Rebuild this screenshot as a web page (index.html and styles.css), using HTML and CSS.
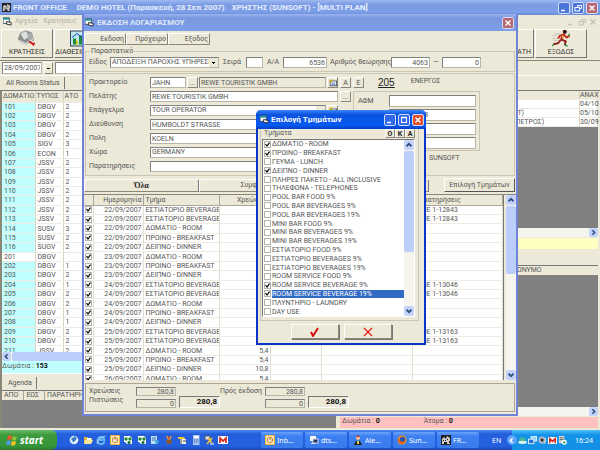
FILE: index.html
```html
<!DOCTYPE html>
<html lang="el">
<head>
    <meta charset="UTF-8">
    <meta name="viewport" content="width=device-width, initial-scale=1.0">
    <title>FRONT OFFICE</title>
    <link rel="stylesheet" href="styles.css">
</head>
<body>
    <svg class="defs" aria-hidden="true">
        <symbol id="i-form" viewBox="0 0 10 10"><rect x="0" y="1" width="7" height="6" fill="#fff" stroke="#345"/><rect x="0" y="1" width="7" height="2" fill="#2a9a9a"/><path d="M4 5l5 1v3l-5-1z" fill="#fff" stroke="#222"/></symbol>
        <symbol id="i-hotel" viewBox="0 0 10 10"><rect width="10" height="10" fill="#222"/><path d="M1 9V4l2-2 2 2 1-3 3 2v6" fill="#ccc"/><path d="M2 5h1v1H2zM4 5h1v1H4zM6 4h1v1H6zM3 7h3v2H3zM8 6h1v2H8z" fill="#222"/></symbol>
        <symbol id="i-book" viewBox="0 0 20 18"><path d="M1 9l2-5 6-3 6 2 2 8-8 4-7-3z" fill="#8a8f8c"/><path d="M3 4l6-3 4 6-6 4z" fill="#dde1dd" stroke="#777" stroke-width=".6"/><path d="M10 4l4-1 3 7-5 2z" fill="#a8aea9"/><path d="M2 11l7 3 7-4" stroke="#f4f4f4" fill="none"/><path d="M12 12l3 2h3M15 14l2 2" stroke="#d31212" stroke-width="1.600" fill="none"/></symbol>
        <symbol id="i-chart" viewBox="0 0 20 16"><rect width="20" height="16" fill="#345"/><rect x="1" y="1" width="18" height="14" fill="#bfe6ea"/><path d="M3 14V8h3v6zM9 14V5h3v9zM15 14V3h3v11z" fill="#1b8a3c"/><path d="M6 14V10h2v4zM12 14V8h2v6z" fill="#e7c11a"/><path d="M2 7l5-4 5 4 6-5" stroke="#1747c4" fill="none"/></symbol>
        <symbol id="i-run" viewBox="0 0 20 20"><path d="M1 7h7M3 5h7M1 10h6M2 12h5" stroke="#c9c5b8" stroke-width="1"/><circle cx="14" cy="3" r="2.200" fill="#3b1512"/><path d="M13 5l-3 6M13 6l-4 1-2 3M13 6l3 3 3-2" stroke="#c02a1c" stroke-width="2" fill="none"/><path d="M10 11l5 2-1 4M10 11l-3 4-5 1" stroke="#8c1f16" stroke-width="2" fill="none"/><path d="M14 17l3 1M2 16l-1 2M18 7l1-2" stroke="#159a3c" stroke-width="1.400"/><path d="M11 7l2 3" stroke="#f6c945" stroke-width="1.200"/></symbol>
        <symbol id="i-open" viewBox="0 0 10 10"><rect x="1.500" y="2.500" width="8" height="6" fill="#fff" stroke="#445"/><path d="M3 5h5M3 7h5" stroke="#3b69b5"/><path d="M0 1l4 3M3 0v4M0 3h4" stroke="#d8b600"/></symbol>
        <symbol id="i-check" viewBox="0 0 10 10"><path d="M1 5l2 4 5-8" fill="none" stroke="#d80000" stroke-width="1.800"/></symbol>
        <symbol id="i-x" viewBox="0 0 10 10"><path d="M1 1l8 8M9 1L1 9" fill="none" stroke="#e01818" stroke-width="1.100"/></symbol>
        <symbol id="i-up" viewBox="0 0 8 8"><path d="M2 5l2-2 2 2" fill="none" stroke="#35507f" stroke-width="1.500"/></symbol>
        <symbol id="i-down" viewBox="0 0 8 8"><path d="M2 3l2 2 2-2" fill="none" stroke="#35507f" stroke-width="1.500"/></symbol>
        <symbol id="i-left" viewBox="0 0 8 8"><path d="M5 2L3 4l2 2" fill="none" stroke="#35507f" stroke-width="1.500"/></symbol>
        <symbol id="i-expand" viewBox="0 0 8 8"><path d="M5 2L3 4l2 2" fill="none" stroke="#fff" stroke-width="1.500"/></symbol>
        <symbol id="i-right" viewBox="0 0 8 8"><path d="M3 2l2 2-2 2" fill="none" stroke="#35507f" stroke-width="1.500"/></symbol>
        <symbol id="i-min" viewBox="0 0 8 8"><path d="M1 6.500h4" stroke="currentColor" stroke-width="1.500"/></symbol>
        <symbol id="i-max" viewBox="0 0 8 8"><path d="M1 1.500h6" stroke="currentColor" stroke-width="1.500"/><rect x="1.500" y="1.500" width="5" height="5" fill="none" stroke="currentColor"/></symbol>
        <symbol id="i-restore" viewBox="0 0 8 8"><path d="M3.500 3V1.500h4v3H6" fill="none" stroke="currentColor"/><rect x="1" y="3.500" width="4.500" height="3.500" fill="none" stroke="currentColor"/></symbol>
        <symbol id="i-close" viewBox="0 0 8 8"><path d="M1.500 1.500l5 5M6.500 1.500l-5 5" stroke="currentColor" stroke-width="1.400"/></symbol>
        <symbol id="i-flag" viewBox="0 0 12 12"><path d="M2 2q2-1.500 4 0L5 6Q3 5 1 6z" fill="#f0592a"/><path d="M7 2q2 1.500 4 0l-1 4q-2 1-4 0z" fill="#8cc63e"/><path d="M1 7q2-1 4 0l-1 4Q2 10 0 11z" fill="#4f9bf0"/><path d="M6 7q2 1 4 0l-1 4q-2 1-4 0z" fill="#fbc81d"/></symbol>
        <symbol id="i-ie" viewBox="0 0 10 10"><path d="M8.500 6.500A3.600 3.600 0 1 1 8.600 5H3" fill="none" stroke="#6cc5f7" stroke-width="1.700"/><path d="M1 9Q0 6 5 3t4-1" fill="none" stroke="#cfe9fb" stroke-width=".8"/></symbol>
        <symbol id="i-globe" viewBox="0 0 10 10"><circle cx="5" cy="5" r="4.300" fill="#d9ecfb"/><path d="M2 4l4-3 2 3-3 4z" fill="#3b7fc4"/><path d="M5 8l4-4" stroke="#fff" stroke-width="1.300"/></symbol>
        <symbol id="i-folder" viewBox="0 0 10 10"><path d="M1 2h3l1 1h4v5H1z" fill="#e5b93f"/><path d="M2 5h8L8 9H1z" fill="#fbe69a"/><rect x="4" y="3" width="4" height="2" fill="#fff"/></symbol>
        <symbol id="i-outlook" viewBox="0 0 10 10"><rect width="10" height="10" rx="1" fill="#f3b23c"/><rect x="1" y="1" width="8" height="8" fill="#fde8ba"/><circle cx="5" cy="5" r="2.600" fill="#fff" stroke="#c07818"/><path d="M5 3v2h1.500" stroke="#a05c10" fill="none" stroke-width=".8"/></symbol>
        <symbol id="i-green" viewBox="0 0 10 10"><path d="M1 1h6l2 2v4H1z" fill="#fff"/><circle cx="3" cy="4" r="1.700" fill="#1d8a33"/><circle cx="7" cy="4" r="1.700" fill="#1d8a33"/><path d="M2 7h7v2H4z" fill="#f3f3f3"/><circle cx="6" cy="7.500" r="1.500" fill="#176b2a"/></symbol>
        <symbol id="i-doc" viewBox="0 0 10 10"><rect x="1" y="1" width="6" height="8" fill="#bfe2f7"/><path d="M2 3h4M2 5h4" stroke="#3472c0"/><circle cx="7" cy="7" r="2" fill="#43a7dd"/></symbol>
        <symbol id="i-brush" viewBox="0 0 10 10"><path d="M3 1l2 5M7 1L5 6" stroke="#e5a12c" stroke-width="1.500"/><path d="M5 1v5" stroke="#d23c28"/><path d="M2 5h6L7 9H3z" fill="#8b5a34"/></symbol>
        <symbol id="i-tool" viewBox="0 0 10 10"><path d="M1 2h6l1 2H1z" fill="#e8c63a"/><rect x="3" y="4" width="6" height="5" fill="#f4f0e4"/><path d="M4 4v5M6 6h3" stroke="#444"/></symbol>
        <symbol id="i-calc" viewBox="0 0 10 10"><rect x="2" y="0" width="6.500" height="10" fill="#a9c7f2"/><rect x="3" y="1" width="4.500" height="2" fill="#fff"/><path d="M3 5h5M3 7h5" stroke="#2c57a8" stroke-dasharray="1 .7"/></symbol>
        <symbol id="i-pair" viewBox="0 0 10 10"><rect x="1" y="1" width="5" height="4" fill="#dfe8f4" stroke="#556"/><path d="M4 3l4 5M8 3L3 9" stroke="#f3c63a" stroke-width="1.600"/><path d="M6 9h4" stroke="#fff"/></symbol>
        <symbol id="i-gmail" viewBox="0 0 10 10"><rect y="1" width="10" height="8" rx="1" fill="#fff"/><path d="M2 8V3l3 3 3-3v5" fill="none" stroke="#d1261c" stroke-width="1.700"/></symbol>
        <symbol id="i-pc" viewBox="0 0 10 10"><rect x="1" y="1" width="6" height="5" fill="#f4f4f4"/><rect x="4" y="4" width="5" height="4" fill="#22335c" stroke="#dde"/><path d="M2 8h4v1H2z" fill="#d8e2f2"/></symbol>
        <symbol id="i-net" viewBox="0 0 10 10"><rect x="3.500" y=".5" width="6" height="5" fill="#8fd0fb" stroke="#e8f4ff"/><rect x=".5" y="3.500" width="6" height="5" fill="#2a6fd0" stroke="#e8f4ff"/></symbol>
        <symbol id="i-man" viewBox="0 0 10 10"><circle cx="5" cy="3" r="2" fill="#f0c090"/><path d="M3 2l2-2 2 2z" fill="#c22"/><path d="M1 10l2-4h4l2 4z" fill="#222"/><path d="M4 6h2v3H4z" fill="#e6d23a"/></symbol>
        <symbol id="i-fox" viewBox="0 0 10 10"><circle cx="5" cy="5" r="4.500" fill="#f08a1c"/><circle cx="5.500" cy="4.500" r="2.700" fill="#2b55b5"/><path d="M1 3q2 5 7 3l-1 2q-3 2-6-2z" fill="#e25a12"/></symbol>
        <symbol id="i-hat" viewBox="0 0 10 10"><path d="M1 6q0-4 4-5 4 1 4 5z" fill="#46b59a"/><ellipse cx="5" cy="7" rx="5" ry="1.800" fill="#dff2ee"/></symbol>
        <symbol id="i-speaker" viewBox="0 0 10 10"><circle cx="4.500" cy="4.500" r="3.500" fill="#8a93a0" stroke="#dde"/><circle cx="4.500" cy="4.500" r="1.400" fill="#333"/><path d="M8 2q2 3-1 7" stroke="#cfd6e0" fill="none"/></symbol>
        <symbol id="i-play" viewBox="0 0 10 10"><rect x="1" y="0" width="6" height="8" fill="#d8d8d8"/><path d="M2 2h4M2 4h4" stroke="#555"/><circle cx="7" cy="7" r="2.800" fill="#fff"/><path d="M6 5.500l3 1.500-3 1.500z" fill="#1a8a34"/></symbol>
    </svg>

    <header class="app-title">
        <svg class="ic"><use href="#i-hotel"/></svg>
        <h1>FRONT OFFICE</h1>
        <span class="app-hotel">DEMO HOTEL (Παρασκευή, 28 Σεπ 2007)</span>
        <span>ΧΡΗΣΤΗΣ (SUNSOFT) - [MULTI PLAN]</span>
        <div class="win-buttons">
            <button class="wb" aria-label="Minimize"><svg><use href="#i-min"/></svg></button>
            <button class="wb" aria-label="Restore"><svg><use href="#i-restore"/></svg></button>
            <button class="wb wb-close" aria-label="Close"><svg><use href="#i-close"/></svg></button>
        </div>
    </header>
    <nav class="menubar">
        <svg class="ic"><use href="#i-form"/></svg>
        <a href="#">Αρχεία</a><a href="#">Κρατήσεις</a><a href="#">Υπ</a>
        <div class="mdi"><svg><use href="#i-min"/></svg><svg><use href="#i-restore"/></svg><svg><use href="#i-close"/></svg></div>
    </nav>
    <div class="toolbar">
        <button><svg><use href="#i-book"/></svg>ΚΡΑΤΗΣΕΙΣ</button>
        <button class="tb-chart"><svg><use href="#i-chart"/></svg>ΔΙΑΘΕΣΙΜ.</button>
        <button class="tb-last"><svg></svg>ΠΕΛΑΤΗ</button>
        <button><svg><use href="#i-run"/></svg>ΕΞΟΔΟΣ</button>
    </div>
    <div class="date-row">
        <input type="text" class="date" value="28/09/2007" aria-label="Ημερομηνία">
        <button class="drop" aria-label="Επιλογή ημερομηνίας"></button>
        <input type="text" class="search" aria-label="Αναζήτηση">
    </div>
    <div class="tab-row"><button class="flat-tab">All Rooms Status</button></div>

    <main class="work">
        <section class="left">
            <div class="rooms">
                <table>
                    <thead><tr><th class="c-room">ΔΩΜΑΤΙΟ</th><th class="c-type">ΤΥΠΟΣ</th><th>ΑΤΟ</th></tr></thead>
                    <tbody id="rooms"></tbody>
                </table>
            </div>
            <div class="hscroll"><svg><use href="#i-left"/></svg><i></i></div>
            <div class="room-count">Δωμάτια : <b>153</b></div>
            <div class="tab-row agenda"><button class="flat-tab">Agenda</button></div>
            <div class="grid-head"><span>ΑΠΟ</span><span>ΕΩΣ</span><span>ΠΑΡΑΤΗΡΗΣΕΙΣ</span></div>
            <div class="gray-area"></div>
        </section>
        <section class="right">
            <table class="arrivals">
                <thead><tr><th></th><th class="c-arr">ΑΝΑΧ</th></tr></thead>
                <tbody>
                    <tr><td></td><td>04/10</td></tr>
                    <tr><td>ΡΤ)</td><td>05/10</td></tr>
                    <tr><td>(ΠΕΤΡΟΣ)</td><td>30/09</td></tr>
                </tbody>
            </table>
            <div class="gray-area g1"></div>
            <div class="hscroll end"><svg><use href="#i-right"/></svg></div>
            <div class="yellow"></div>
            <div class="blank"></div>
            <div class="grid-head"><span class="surname">ΕΠΩΝΥΜΟ</span></div>
            <div class="gray-area"></div>
            <div class="hscroll end"><svg><use href="#i-right"/></svg></div>
            <div class="pink"><span>Δωμάτια : <b>0</b></span><span>Άτομα : <b>0</b></span></div>
        </section>
    </main>

    <section class="window bill">
        <header class="bill-title">
            <svg class="ic"><use href="#i-form"/></svg>
            <h2>ΕΚΔΟΣΗ ΛΟΓΑΡΙΑΣΜΟΥ</h2>
            <button class="wb wb-close" aria-label="Close"><svg><use href="#i-close"/></svg></button>
        </header>
        <div class="bill-actions">
            <button class="btn">Εκδοση</button><button class="btn">Πρόχειρο</button><button class="btn">Εξοδος</button>
        </div>
        <fieldset class="document">
            <legend>Παραστατικό</legend>
            <label for="kind">Είδος</label>
            <select id="kind" class="kind"><option>ΑΠΟΔΕΙΞΗ ΠΑΡΟΧΗΣ ΥΠΗΡΕΣΙΩΝ</option></select>
            <label for="series" class="l-series">Σειρά</label>
            <input type="text" id="series" class="series">
            <label for="num" class="l-num">Α/Α</label>
            <input type="text" id="num" class="num" value="6536">
            <label for="auth" class="l-auth">Αριθμός θεώρησης</label>
            <input type="text" id="auth" class="auth" value="4063">
            <span class="dash">—</span>
            <input type="text" class="auth" value="0" aria-label="Έως">
        </fieldset>
        <div class="customer">
            <div class="fields">
                <div class="field"><label for="agency">Πρακτορείο</label><input type="text" id="agency" class="code" value="JAHN"><button class="sq">...</button><input type="text" class="grow ro" value="REWE TOURISTIK GMBH" readonly aria-label="Επωνυμία"><button class="sq" aria-label="Άνοιγμα"><svg><use href="#i-open"/></svg></button></div>
                <div class="field"><label for="client">Πελάτης</label><input type="text" id="client" class="grow" value="REWE TOURISTIK GMBH"></div>
                <div class="field"><label for="job">Επάγγελμα</label><select id="job" class="grow"><option>TOUR OPERATOR</option></select><button class="sq" aria-label="Άνοιγμα"><svg><use href="#i-open"/></svg></button></div>
                <div class="field"><label for="addr">Διεύθυνση</label><input type="text" id="addr" class="grow" value="HUMBOLDT STRASSE"></div>
                <div class="field"><label for="city">Πολη</label><input type="text" id="city" class="grow" value="KOELN"></div>
                <div class="field"><label for="country">Χώρα</label><select id="country" class="grow"><option>GERMANY</option></select></div>
                <div class="field"><label for="notes">Παρατηρήσεις</label><input type="text" id="notes" class="grow"></div>
            </div>
            <div class="side">
                <div class="side-top"><button class="sq">A</button><button class="sq">E</button><a href="#" class="room-no">205</a><span>ΕΝΕΡΓΟΣ</span></div>
                <div class="side-mid">
                    <button class="sq">...</button>
                    <div class="tax">
                        <div class="tax-row"><label for="afm">ΑΦΜ</label><input type="text" id="afm"></div>
                        <div class="tax-row"><label for="adt">ΑΡ.Δ.Τ</label><input type="text" id="adt" value="0030 91288"></div>
                        <div class="tax-row"><input type="text" aria-label="ΔΟΥ"></div>
                        <div class="tax-row"><input type="text" aria-label="Τηλέφωνο"></div>
                    </div>
                </div>
                <div class="user">SUNSOFT</div>
            </div>
        </div>
        <div class="bill-tabs">
            <button class="tab on">Όλα</button><button class="tab">Συμφωνία</button><button class="tab" aria-label="Extra"></button>
            <button class="btn choose">Επιλογή Τμημάτων</button>
        </div>
        <div class="charges">
            <div class="charges-clip">
                <table>
                    <thead><tr><th class="w-chk"></th><th class="w-date num-cell">Ημερομηνία</th><th class="w-dep">Τμήμα</th><th class="w-sum num-cell">Χρεώσεις</th><th class="w-sum"></th><th class="w-gap"></th><th>Παρατηρήσεις</th></tr></thead>
                    <tbody id="charges"></tbody>
                </table>
            </div>
            <div class="vscroll"><svg><use href="#i-up"/></svg><i class="long"></i><svg><use href="#i-down"/></svg></div>
        </div>
        <div class="totals">
            <div class="t-labels"><label for="t1">Χρεώσεις</label><label for="t2">Πιστώσεις</label></div>
            <div class="t-stack"><input type="text" id="t1" value="280,8" readonly><input type="text" id="t2" value="0" readonly></div>
            <output class="t-sum">280,8</output>
            <label for="t3" class="t-next">Πρός έκδοση</label>
            <div class="t-stack"><input type="text" id="t3" value="280,8" readonly><input type="text" value="0" readonly aria-label="Πιστώσεις προς έκδοση"></div>
            <output class="t-sum">280,8</output>
        </div>
    </section>

    <section class="window dialog" role="dialog" aria-labelledby="dlg">
        <header class="dialog-title">
            <svg class="ic"><use href="#i-form"/></svg>
            <h2 id="dlg">Επιλογή Τμημάτων</h2>
            <button class="wb" aria-label="Minimize"><svg><use href="#i-min"/></svg></button>
            <button class="wb" aria-label="Maximize"><svg><use href="#i-max"/></svg></button>
            <button class="wb wb-close" aria-label="Close"><svg><use href="#i-close"/></svg></button>
        </header>
        <div class="group">
            <div class="group-head"><span>Τμήματα</span><button class="mini">O</button><button class="mini">K</button><button class="mini">A</button></div>
            <div class="picker">
                <ul id="depts"></ul>
                <div class="vscroll"><svg><use href="#i-up"/></svg><i></i><svg><use href="#i-down"/></svg></div>
            </div>
        </div>
        <div class="dialog-actions">
            <button class="btn" aria-label="OK"><svg><use href="#i-check"/></svg></button>
            <button class="btn" aria-label="Άκυρο"><svg><use href="#i-x"/></svg></button>
        </div>
    </section>

    <footer class="taskbar">
        <button class="start"><svg><use href="#i-flag"/></svg>start</button>
        <div class="quick">
            <svg><use href="#i-globe"/></svg><svg><use href="#i-folder"/></svg><svg><use href="#i-ie"/></svg><svg><use href="#i-outlook"/></svg>
            <svg><use href="#i-green"/></svg><svg><use href="#i-green"/></svg><svg><use href="#i-doc"/></svg><svg><use href="#i-brush"/></svg>
            <svg><use href="#i-tool"/></svg><svg><use href="#i-calc"/></svg><svg><use href="#i-pair"/></svg><svg><use href="#i-gmail"/></svg>
        </div>
        <div class="tasks">
            <button><svg><use href="#i-outlook"/></svg>Inb...</button>
            <button><svg><use href="#i-pc"/></svg>dts...</button>
            <button><svg><use href="#i-man"/></svg>Ale...</button>
            <button><svg><use href="#i-fox"/></svg>Sun...</button>
            <button><svg><use href="#i-hotel"/></svg>FR...</button>
        </div>
        <span class="lang">EN</span>
        <div class="tray">
            <button class="expand" aria-label="Show hidden icons"><svg><use href="#i-expand"/></svg></button>
            <svg><use href="#i-hat"/></svg><svg><use href="#i-net"/></svg><svg><use href="#i-speaker"/></svg><svg><use href="#i-gmail"/></svg><svg><use href="#i-play"/></svg>
            <time>16:24</time>
        </div>
    </footer>

    <script>
        const rooms = [
            ['101', 'DBGV', 2], ['102', 'DBGV', 2], ['103', 'DBGV', 2], ['104', 'DBGV', 2], ['105', 'SIGV', 3],
            ['106', 'ECON', 1], ['107', 'JSSV', 2], ['108', 'JSSV', 2], ['109', 'JSSV', 2], ['110', 'JSSV', 2],
            ['111', 'JSSV', 2], ['112', 'JSSV', 2], ['113', 'JSSV', 2], ['114', 'SUSV', 3], ['115', 'SUSV', 2],
            ['116', 'SUGV', 2], ['201', 'DBGV', ''], ['202', 'DBGV', 1], ['203', 'DBGV', 2], ['204', 'DBGV', 1],
            ['205', 'DBGV', 2], ['206', 'DBGV', 2], ['207', 'DBGV', 1], ['208', 'DBGV', 1], ['209', 'DBGV', 2],
            ['210', 'DBGV', 2], ['211', 'JSSV', 2]
        ];
        document.getElementById('rooms').innerHTML = rooms.map(r =>
            `<tr><td class="${r[2] ? 'busy' : ''}">${r[0]}</td><td>${r[1]}</td><td>${r[2]}</td></tr>`).join('');

        const R = 'ΕΣΤΙΑΤΟΡΙΟ BEVERAGE', D = 'ΔΩΜΑΤΙΟ - ROOM', P = 'ΠΡΩΙΝΟ - BREAKFAST', N = 'ΔΕΙΠΝΟ - DINNER';
        const charges = [
            [22, R, '5,4', 'ΜΕ 1-12843'], [22, R, '5,4', 'ΜΕ 1-12843'], [22, D, '5,4', ''], [22, P, '5,4', ''], [22, N, '10,8', ''],
            [23, D, '5,4', ''], [23, P, '5,4', ''], [23, N, '10,8', ''], [24, R, '5,4', 'ΜΕ 1-13046'], [24, R, '5,4', 'ΜΕ 1-13046'],
            [24, D, '5,4', ''], [24, P, '5,4', ''], [24, N, '10,8', ''], [25, R, '5,4', 'ΜΕ 1-13163'], [25, R, '5,4', 'ΜΕ 1-13163'],
            [25, D, '5,4', ''], [25, P, '5,4', ''], [25, N, '10,8', ''], [26, D, '5,4', '']
        ];
        document.getElementById('charges').innerHTML = charges.map(c =>
            `<tr><td><input type="checkbox" checked aria-label="${c[1]}"></td><td class="num-cell">${c[0]}/09/2007</td><td>${c[1]}</td><td class="num-cell">${c[2]}</td><td></td><td></td><td class="remark">${c[3]}</td></tr>`).join('');

        const depts = [
            D, P, 'ΓΕΥΜΑ - LUNCH', N, 'ΠΛΗΡΕΣ ΠΑΚΕΤΟ - ALL INCLUSIVE', 'ΤΗΛΕΦΩΝΑ - TELEPHONES',
            'POOL BAR FOOD 9%', 'POOL BAR BEVERAGES 9%', 'POOL BAR BEVERAGES 19%',
            'MINI BAR FOOD 9%', 'MINI BAR BEVERAGES 9%', 'MINI BAR BEVERAGES 19%',
            'ΕΣΤΙΑΤΟΡΙΟ FOOD 9%', 'ΕΣΤΙΑΤΟΡΙΟ BEVERAGES 9%', 'ΕΣΤΙΑΤΟΡΙΟ BEVERAGES 19%',
            'ROOM SERVICE FOOD 9%', 'ROOM SERVICE BEVERAGE 9%', 'ROOM SERVICE BEVERAGE 19%',
            'ΠΛΥΝΤΗΡΙΟ - LAUNDRY', 'DAY USE'
        ];
        const picked = [0, 1, 3, 16, 17];
        document.getElementById('depts').innerHTML = depts.map((d, i) =>
            `<li class="${i === 17 ? 'sel' : ''}"><input type="checkbox" id="d${i}" ${picked.includes(i) ? 'checked' : ''}><label for="d${i}">${d}</label></li>`).join('');
    </script>
</body>
</html>
```
FILE: styles.css
```css
* { margin: 0; padding: 0; box-sizing: border-box; }
body {
    font: 7px/9px Roboto, "Liberation Sans", sans-serif;
    color: #555;
    background: #ece9d8;
    height: 100vh;
    display: flex;
    flex-direction: column;
    overflow: hidden;
    white-space: nowrap;
}
button, input, select { font: inherit; color: inherit; border-radius: 0; }
h1, h2 { font: inherit; }
a { color: inherit; text-decoration: none; }
svg { display: block; flex: none; }
.defs { position: absolute; width: 0; height: 0; }
.ic { width: 9px; height: 9px; }

input[type="text"], select {
    appearance: none; min-width: 0; height: 11px; padding: 0 1px; background: #fff;
    border: 1px solid; border-color: #808080 #b8b5a6 #b8b5a6 #808080;
}
select {
    padding: 0 9px 0 1px;
    background: linear-gradient(#000, #000) right 3px top 4px / 3px 1px no-repeat,
        linear-gradient(#000, #000) right 4px top 5px / 1px 1px no-repeat,
        linear-gradient(#ece9d8, #ece9d8) right / 9px 100% no-repeat, #fff;
}
input[type="checkbox"] {
    appearance: none; display: block; width: 7px; height: 7px; border: 1px solid #b4b4ae; background: #fff; flex: none;
}
input[type="checkbox"]:checked {
    background: #fff url("data:image/svg+xml,%3Csvg xmlns='http://www.w3.org/2000/svg' viewBox='0 0 5 5'%3E%3Cpath d='M.5 2l1.500 2L4.500 .7' fill='none' stroke='%23000' stroke-width='1.200'/%3E%3C/svg%3E");
}
.btn, .sq, .mini, .drop {
    background: #ece9d8; border: 1px solid; border-color: #fff #8a8778 #8a8778 #fff;
}
.sq { width: 11px; height: 11px; display: flex; align-items: center; justify-content: center; line-height: 8px; }
.sq svg { width: 8px; height: 8px; }
table { border-collapse: collapse; table-layout: fixed; width: 100%; }
th { font-weight: normal; text-align: left; background: #ece9d8; }

/* main window */
.app-title {
    height: 15px; flex: none; display: flex; align-items: center; gap: 2px; padding: 0 2px;
    background: linear-gradient(#9db9f0, #7b9be4 30%, #7d9fe8 80%, #6a87d6);
    color: #e6edfb; font-size: 8px; font-weight: bold;
}
.app-hotel { margin: 0 5px 0 8px; }
.win-buttons { display: flex; gap: 2px; margin-left: auto; }
.wb {
    width: 12px; height: 12px; border: 1px solid #d3dcf6; border-radius: 2px; background: #4a76dc; color: #fff;
    display: flex; align-items: center; justify-content: center;
}
.wb svg { width: 8px; height: 8px; }
.wb-close { background: #b5686f; }
.menubar { height: 13px; flex: none; display: flex; align-items: center; gap: 6px; padding: 0 3px; color: #b3b0a2; }
.menubar .ic { margin-right: -3px; }
.mdi { display: flex; gap: 3px; margin-left: auto; color: #c6c3b4; }
.mdi svg { width: 8px; height: 8px; }
.toolbar { height: 33px; flex: none; display: flex; gap: 1px; padding: 1px 13px 2px 1px; border-bottom: 1px solid #8a8778; }
.toolbar button {
    width: 52px; background: #ece9d8; border: 1px solid; border-color: #fff #777 #777 #fff; color: #333;
    display: flex; flex-direction: column; align-items: center; justify-content: flex-end;
}
.toolbar svg { width: 20px; height: 19px; }
.toolbar .tb-chart { align-items: flex-start; }
.tb-chart svg { margin-left: 15px; }
.toolbar .tb-last { margin-left: auto; align-items: flex-end; padding-right: 2px; }
.date-row { height: 14px; flex: none; display: flex; padding: 1px 2px; gap: 2px; }
.date-row input[type="text"] { height: 12px; }
.date-row .date { width: 40px; }
.date-row .drop { width: 9px; height: 12px; background: linear-gradient(#000, #000) center / 3px 1px no-repeat, #ece9d8; }
.date-row .search { width: 288px; }
.tab-row { height: 15px; flex: none; padding: 1px 2px; border-top: 1px solid #fff; }
.flat-tab { height: 12px; padding: 0 4px; background: none; border: 0; border-right: 1px solid #777; }

.work { flex: 1; min-height: 0; display: flex; gap: 4px; border-left: 2px solid #8a8778; border-top: 1px solid #777; margin-bottom: 2px; }
.left { width: 334px; display: flex; flex-direction: column; }
.right { flex: 1; display: flex; flex-direction: column; padding-right: 2px; }
.rooms { height: 261px; flex: none; overflow: hidden; background: #fff; }
.rooms table { height: 265px; }
.rooms th { height: 11px; }
.rooms td, .rooms th, .arrivals td, .arrivals th { padding: 0 0 0 2px; line-height: 8px; border-right: 1px solid #d6d3c4; border-bottom: 1px solid #eeece2; }
.rooms th { padding-left: 1px; }
.c-room { width: 33px; }
.c-type { width: 28px; }
.busy { background: #c0ffff; }
.hscroll { height: 9px; flex: none; display: flex; background: #f5f4ee; }
.hscroll svg { width: 9px; height: 9px; background: #c3d3fb; border-radius: 2px; }
.hscroll i { flex: 1; margin-left: 1px; background: #bccffa; border-radius: 2px; }
.hscroll.end { justify-content: flex-end; }
.room-count { height: 12px; flex: none; line-height: 10px; background: #c0ffff; }
.room-count b, .pink b { color: #111; }
.agenda { height: 17px; padding-top: 3px; }
.grid-head { height: 10px; flex: none; display: flex; border-top: 1px solid #777; background: #ece9d8; }
.grid-head span { padding: 0 5px 0 2px; border-right: 1px solid #aaa799; }
.grid-head .surname { padding-left: 168px; border: 0; }
.gray-area { flex: 1; background: #808080; }
.arrivals { background: #fff; flex: none; }
.arrivals td, .arrivals th { padding-left: 0; }
.arrivals td:first-child { padding-left: 173px; }
.c-arr { width: 18px; }
.g1 { flex: 0 0 101px; }
.yellow { height: 12px; flex: none; border-top: 1px solid #ece9d8; background: #ffffc0; }
.blank { height: 16px; flex: none; }
.pink { height: 12px; flex: none; display: flex; gap: 44px; padding-left: 2px; background: #ffc0c0; border-top: 1px solid #ece9d8; }

/* windows */
.window { position: absolute; background: #ece9d8; display: flex; flex-direction: column; }
.bill { left: 82px; right: 82px; top: 14px; border: 2px solid #6f83d8; border-top: 0; }
.bill-title {
    height: 17px; display: flex; align-items: center; gap: 3px; padding: 0 2px 0 1px;
    background: linear-gradient(#9ab5ef, #7a97df 25%, #7c9fe9); color: #dfe8fa;
}
.bill-title h2, .dialog-title h2 { flex: 1; font-size: 8px; font-weight: bold; }
.bill-actions { display: flex; margin-top: 2px; }
.bill-actions .btn { width: 42px; height: 12px; text-align: right; padding-right: 1px; line-height: 9px; }
.document {
    margin: 2px 1px 1px; height: 25px; padding: 2px 0 0 3px; display: flex; align-items: center;
    border: 1px solid #c9c6b6;
}
.document legend { margin-left: 1px; padding: 0 1px; height: 8px; line-height: 8px; }
.document label:first-of-type { width: 21px; }
.kind { width: 109px; margin-right: 4px; }
.l-series { width: 23px; }
.series { width: 17px; margin-right: 4px; }
.l-num { width: 16px; }
.document .num { width: 44px; margin-right: 3px; text-align: right; }
.l-auth { width: 61px; }
.document .auth { width: 39px; text-align: right; }
.dash { width: 12px; text-align: center; }
.customer { display: flex; gap: 2px; margin: 0 1px; padding: 3px 0 0 3px; height: 103px; border: 1px solid #c9c6b6; }
.fields { width: 249px; display: flex; flex-direction: column; gap: 3px; }
.field { display: flex; gap: 1px; height: 11px; }
.field label { width: 60px; line-height: 11px; }
.code { width: 36px; }
.grow { flex: 1; }
input[type="text"].ro { background: #ece9d8; }
.side { flex: 1; }
.side-top { display: flex; gap: 2px; height: 11px; }
.room-no { font: 10px/11px "Liberation Sans", sans-serif; text-decoration: underline; color: #222; margin: 0 14px 0 12px; }
.side-mid { display: flex; gap: 2px; margin-top: 3px; }
.tax { border: 1px solid #c9c6b6; padding: 3px 3px 1px 4px; width: 127px; display: flex; flex-direction: column; gap: 2px; }
.tax-row { display: flex; justify-content: flex-end; }
.tax-row label { width: 31px; line-height: 12px; }
.tax-row input[type="text"] { width: 87px; height: 12px; }
.user { padding: 3px 0 0 89px; }
.bill-tabs { display: flex; margin-top: 2px; height: 17px; border-bottom: 1px solid #8a8778; }
.tab {
    width: 115px; height: 13px; margin-top: 1px; background: #ece9d8; border: 1px solid; border-color: #fff #777 #8a8778 #fff;
    border-radius: 3px 3px 0 0;
}
.tab.on { font-family: "Liberation Serif", serif; font-weight: bold; font-size: 8px; color: #222; }
.choose { width: 71px; height: 14px; margin: 0 1px 0 auto; border-color: #fff #555 #555 #fff; }
.charges { display: flex; gap: 2px; }
.charges-clip { flex: 1; height: 185px; overflow: hidden; background: #fff; border-right: 1px solid #777; }
.charges table { height: 189px; }
.charges th { height: 10px; }
.charges td, .charges th { padding: 0 2px; line-height: 8px; border-right: 1px solid #e2dfd2; border-bottom: 1px solid #eeece2; overflow: hidden; }
.charges th { border-color: #aaa799; }
.charges td:first-child { padding: 0 1px; }
.charges .num-cell { text-align: right; padding: 0 1px; }
.charges .remark { padding-left: 8px; }
.w-chk { width: 9px; }
.w-date { width: 50px; }
.w-dep { width: 76px; }
.w-sum { width: 51px; }
.w-gap { width: 91px; }
.vscroll { width: 10px; display: flex; flex-direction: column; background: #f5f4ee; }
.vscroll svg { width: 10px; height: 10px; background: #c3d3fb; border-radius: 2px; }
.vscroll svg:last-child { margin-top: auto; }
.vscroll i { height: 101px; margin: 1px 0; background: #bccffa; border-radius: 2px; }
.vscroll .long { height: 68px; }
.totals { display: flex; align-items: flex-start; margin: 3px 1px 2px; padding: 3px 3px 1px; height: 29px; border: 1px solid #aaa799; }
.t-labels { width: 47px; display: flex; flex-direction: column; }
.t-stack { display: flex; flex-direction: column; gap: 3px; width: 40px; }
.t-stack input[type="text"] { height: 9px; background: #ece9d8; text-align: right; line-height: 7px; }
.t-sum {
    width: 41px; height: 12px; margin: 9px 0 0 3px; padding: 0 2px; text-align: right; color: #111;
    font-size: 8px; font-weight: bold; line-height: 10px; border: 1px solid; border-color: #777 #fff #fff #777;
}
.t-next { width: 45px; }

.dialog { left: 256px; top: 110px; width: 170px; border: 2px solid #0b35c8; border-top: 0; border-radius: 5px 5px 0 0; }
.dialog-title {
    height: 19px; display: flex; align-items: center; gap: 2px; padding: 0 2px 0 4px; margin: 0 -2px;
    background: linear-gradient(#3b86f6, #0a52e0 25%, #0659f2 80%, #0340c4); color: #fff; border-radius: 5px 5px 0 0;
}
.dialog-title .wb { background: #3169ea; }
.dialog-title .wb-close { background: #e0512f; }
.group { margin: 0 5px 0 2px; border: 1px solid #c9c6b6; border-top: 0; padding: 0 3px 3px 1px; }
.group-head { display: flex; height: 10px; padding-left: 2px; }
.group-head span { flex: 1; }
.mini { width: 10px; height: 9px; font-weight: bold; line-height: 6px; color: #222; }
.picker { display: flex; height: 178px; border: 1px solid; border-color: #777 #fff #fff #777; background: #fff; }
.picker ul { flex: 1; display: flex; flex-direction: column; list-style: none; }
.picker li { flex: 1; min-height: 0; display: flex; align-items: center; gap: 1px; padding-left: 1px; }
.picker label { flex: 1; line-height: 8px; }
.sel label { background: #316ac5; color: #fff; }
.dialog-actions { display: flex; justify-content: center; gap: 5px; padding: 3px 0 4px; }
.dialog-actions .btn { width: 48px; height: 15px; display: flex; align-items: center; justify-content: center; box-shadow: 1px 1px #777; }
.dialog-actions svg { width: 10px; height: 10px; }

/* taskbar */
.taskbar {
    height: 20px; flex: none; display: flex; align-items: stretch; color: #fff;
    font-family: "Noto Sans", sans-serif;
    background: linear-gradient(#4b8cf0, #245edb 20%, #2460e0 80%, #1c48b0);
}
.start {
    width: 57px; display: flex; align-items: center; gap: 2px; padding-left: 6px; border: 0; border-radius: 0 6px 6px 0; color: #fff;
    font: italic bold 10px "Open Sans", sans-serif; background: linear-gradient(#6cbb6a, #3b9b3b 25%, #37953a 80%, #2b7a2c);
}
.start svg { width: 12px; height: 12px; }
.quick { display: flex; align-items: center; justify-content: space-between; margin: 0 33px 0 12px; width: 159px; }
.quick svg { width: 10px; height: 10px; }
.tasks { display: flex; gap: 2px; padding: 2px 0; flex: 1; }
.tasks button {
    width: 42px; display: flex; align-items: center; gap: 2px; padding-left: 4px; border: 0; border-radius: 2px; color: #fff;
    background: linear-gradient(#6aa3fb, #3c80f2 25%, #3a7bec);
}
.tasks svg { width: 10px; height: 10px; }
.lang { align-self: center; width: 20px; }
.tray { display: flex; align-items: center; gap: 1px; width: 88px; background: linear-gradient(#4fc0f8, #1292e8 25%, #1490e6); padding-right: 7px; }
.tray svg { width: 9px; height: 9px; }
.tray .expand { width: 10px; height: 10px; border: 0; border-radius: 50%; background: #5aa4f8; margin-left: -5px; }
.tray time { margin-left: auto; }
```
